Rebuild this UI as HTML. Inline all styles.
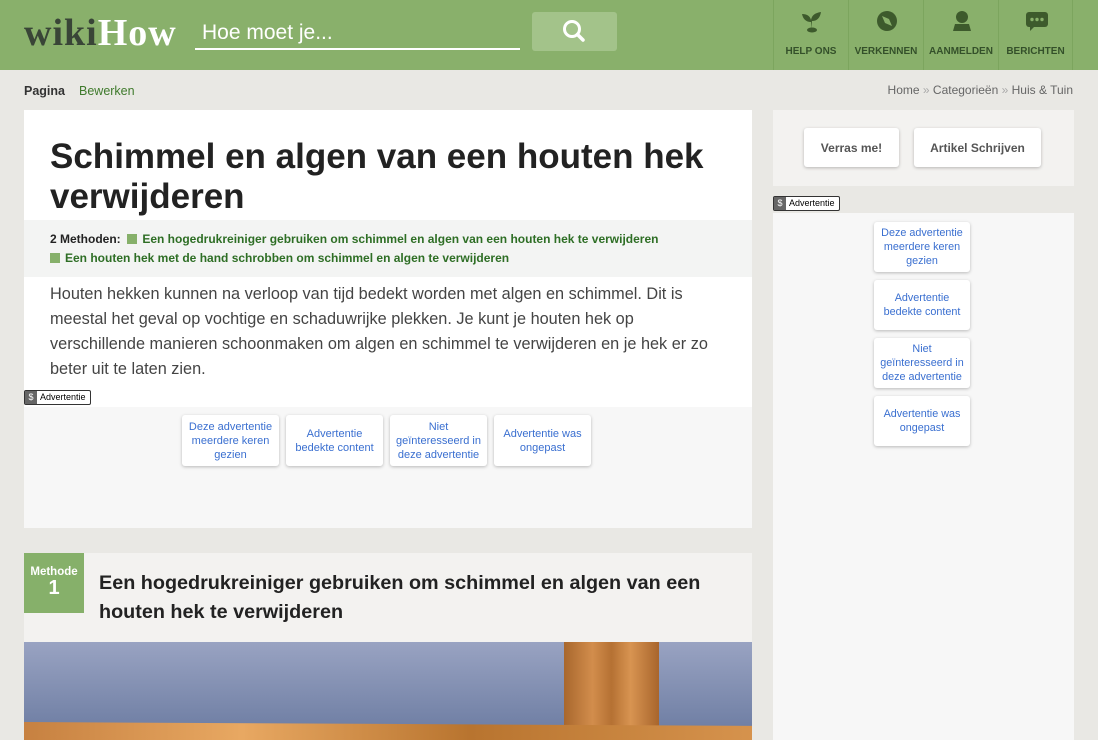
<!DOCTYPE html>
<html><head><meta charset="utf-8"><style>
*{margin:0;padding:0;box-sizing:border-box}
body{width:1098px;height:740px;overflow:hidden;background:#e9e8e4;font-family:"Liberation Sans",Arial,sans-serif;position:relative}
.abs{position:absolute}
#hdr{left:0;top:0;width:1098px;height:70px;background:#89b06b}
.logo{left:24px;top:11px;font-family:"Liberation Serif",serif;font-weight:bold;font-size:38px;letter-spacing:1px}
.srch{left:195px;top:20px;width:325px;height:30px;border-bottom:2px solid #fff;color:#fff;font-size:21px;padding-left:7px;line-height:26px}
.sbtn{left:532px;top:12px;width:85px;height:39px;background:#a3c38a;border-radius:3px}
.nav{top:0;height:70px;width:75px;border-left:1px solid #7ca55e;text-align:center;font-size:10px;font-weight:bold;color:#34502a}
.nav svg{position:absolute;left:26px;top:9px}
.nav span{position:absolute;left:0;right:0;top:46px}
.bc{top:83px;font-size:12px;color:#666}
.card{background:#fff}
.mbtn{position:absolute;background:#fff;box-shadow:0 1px 3px rgba(0,0,0,.25);border-radius:3px;color:#3a6fd0;font-size:11px;text-align:center;display:flex;align-items:center;justify-content:center;line-height:14px;padding:0 6px}
.side .mbtn{padding:0 3px;font-size:10.8px}
.adl{font-size:9px;border:1px solid #333;background:#fff;height:15px;line-height:13px;padding-right:4px;border-radius:2px}
.adl b{display:inline-block;background:#666;color:#fff;width:12px;text-align:center;font-weight:normal;margin-right:3px}
.sq{display:inline-block;width:10px;height:10px;background:#86b06a;margin-right:5px;vertical-align:-1px}
</style></head><body>
<div id="hdr" class="abs">
<div class="abs logo"><span style="color:#394537">wiki</span><span style="color:#fff">How</span></div>
<div class="abs srch">Hoe moet je...</div>
<div class="abs sbtn"><svg width="85" height="39"><circle cx="40" cy="17" r="7.5" fill="none" stroke="#fff" stroke-width="3"/><line x1="45.5" y1="22.5" x2="51" y2="28" stroke="#fff" stroke-width="3.5" stroke-linecap="round"/></svg></div>
<div class="abs nav" style="left:773px"><svg width="24" height="24"><path d="M11 20V13C6 13 3 10 2 5c5 0 8 2 9 6 1-5 4-7 10-8-1 6-4 9-9 9" fill="#3d5a2c"/><ellipse cx="12" cy="21" rx="5" ry="2.5" fill="#3d5a2c"/></svg><span>HELP ONS</span></div>
<div class="abs nav" style="left:848px"><svg width="24" height="24"><circle cx="12" cy="12" r="10" fill="#3d5a2c"/><path d="M7 7l7 3 3 7-7-3z" fill="#89b06b"/></svg><span>VERKENNEN</span></div>
<div class="abs nav" style="left:923px"><svg width="24" height="24"><circle cx="12" cy="8" r="6" fill="#3d5a2c"/><path d="M3 22l2-7h14l2 7z" fill="#3d5a2c"/></svg><span>AANMELDEN</span></div>
<div class="abs nav" style="left:998px;border-right:1px solid #7ca55e"><svg width="24" height="24"><rect x="1" y="3" width="22" height="15" rx="3" fill="#3d5a2c"/><path d="M5 17l0 5 5-5z" fill="#3d5a2c"/><circle cx="7" cy="10.5" r="1.7" fill="#89b06b"/><circle cx="12" cy="10.5" r="1.7" fill="#89b06b"/><circle cx="17" cy="10.5" r="1.7" fill="#89b06b"/></svg><span>BERICHTEN</span></div>
</div>
<div class="abs" style="left:24px;top:84px;font-size:12.5px"><b style="color:#333">Pagina</b><span style="color:#3f7a2c;margin-left:14px">Bewerken</span></div>
<div class="abs bc" style="right:25px">Home <span style="color:#aaa">»</span> Categorieën <span style="color:#aaa">»</span> Huis &amp; Tuin</div>

<div class="abs card" style="left:24px;top:110px;width:728px;height:418px">
<div class="abs" style="left:26px;top:27px;font-size:35px;font-weight:bold;color:#222;line-height:40px;width:690px">Schimmel en algen van een houten hek verwijderen</div>
<div class="abs" style="left:0;top:110px;width:728px;height:57px;background:#f3f4f3;font-size:12px;font-weight:bold;color:#2e6e25;padding:10px 0 0 26px;line-height:19px"><span style="color:#222">2 Methoden:</span>&nbsp;&nbsp;<span class="sq"></span>Een hogedrukreiniger gebruiken om schimmel en algen van een houten hek te verwijderen<br><span class="sq"></span>Een houten hek met de hand schrobben om schimmel en algen te verwijderen</div>
<div class="abs" style="left:26px;top:172px;width:680px;font-size:16.3px;line-height:25px;color:#444">Houten hekken kunnen na verloop van tijd bedekt worden met algen en schimmel. Dit is meestal het geval op vochtige en schaduwrijke plekken. Je kunt je houten hek op verschillende manieren schoonmaken om algen en schimmel te verwijderen en je hek er zo beter uit te laten zien.</div>
<div class="abs" style="left:0;top:297px;width:728px;height:121px;background:#f7f7f7"></div>
<div class="abs adl" style="left:0;top:280px"><b>$</b>Advertentie</div>
<div class="mbtn" style="left:158px;top:305px;width:97px;height:51px">Deze advertentie meerdere keren gezien</div>
<div class="mbtn" style="left:262px;top:305px;width:97px;height:51px">Advertentie bedekte content</div>
<div class="mbtn" style="left:366px;top:305px;width:97px;height:51px">Niet geïnteresseerd in deze advertentie</div>
<div class="mbtn" style="left:470px;top:305px;width:97px;height:51px">Advertentie was ongepast</div>
</div>

<div class="abs" style="left:24px;top:553px;width:728px;height:89px;background:#f3f2f0">
<div class="abs" style="left:0;top:0;width:60px;height:60px;background:#86b06a;color:#fff;text-align:center;font-weight:bold"><div style="font-size:11.5px;margin-top:13px">Methode</div><div style="font-size:20px;line-height:20px">1</div></div>
<div class="abs" style="left:75px;top:16px;font-size:19.8px;font-weight:bold;color:#222;line-height:29px;width:640px">Een hogedrukreiniger gebruiken om schimmel en algen van een houten hek te verwijderen</div>
</div>
<div class="abs" style="left:24px;top:642px;width:728px;height:98px;background:linear-gradient(#99a3c2,#6a7aa0);overflow:hidden">
<div class="abs" style="left:540px;top:0;width:95px;height:100px;background:linear-gradient(90deg,#a8672d,#d28d4c 30%,#b57133 50%,#d89451 70%,#a8652c)"></div>
<div class="abs" style="left:-10px;top:82px;width:760px;height:30px;background:linear-gradient(90deg,#c57f3f,#e8a862 30%,#b8742f 60%,#d8954f);transform:rotate(0.3deg)"></div>
</div>

<div class="abs" style="left:773px;top:110px;width:301px;height:76px;background:#f3f2f0">
<div class="mbtn" style="left:31px;top:18px;width:95px;height:39px;color:#555;font-weight:bold;font-size:12px">Verras me!</div>
<div class="mbtn" style="left:141px;top:18px;width:127px;height:39px;color:#555;font-weight:bold;font-size:12px">Artikel Schrijven</div>
</div>
<div class="abs adl" style="left:773px;top:196px"><b>$</b>Advertentie</div>
<div class="abs side" style="left:773px;top:213px;width:301px;height:527px;background:#f7f7f7">
<div class="mbtn" style="left:101px;top:9px;width:96px;height:50px">Deze advertentie meerdere keren gezien</div>
<div class="mbtn" style="left:101px;top:67px;width:96px;height:50px">Advertentie bedekte content</div>
<div class="mbtn" style="left:101px;top:125px;width:96px;height:50px">Niet geïnteresseerd in deze advertentie</div>
<div class="mbtn" style="left:101px;top:183px;width:96px;height:50px">Advertentie was ongepast</div>
</div>
</body></html>
